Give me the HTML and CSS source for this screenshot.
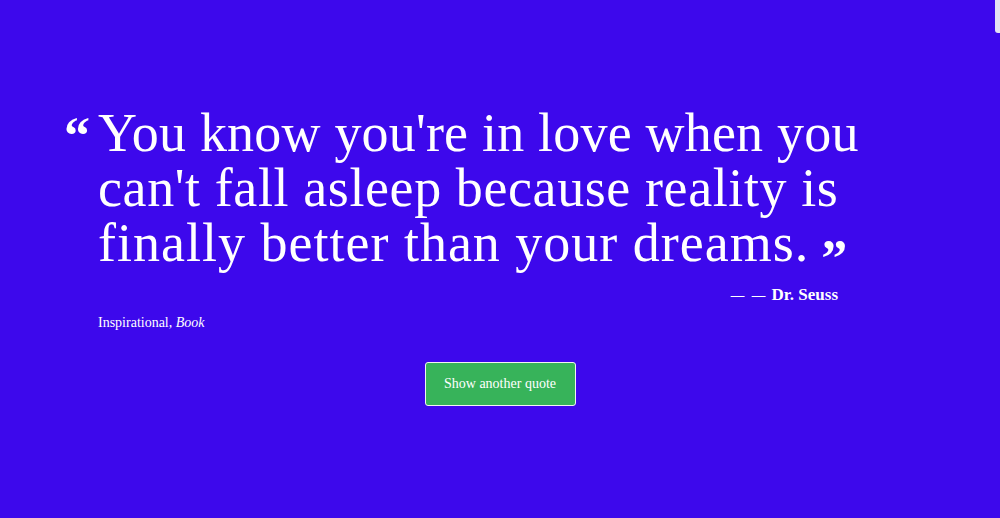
FILE: index.html
```html
<!DOCTYPE html>
<html lang="en">
<head>
<meta charset="utf-8">
<title>Random Quote</title>
<link rel="stylesheet" href="styles.css">
</head>
<body>
<div class="scroll-thumb"></div>
<main class="page">
  <section class="quote-box">
    <blockquote class="quote">
      <span class="mark open">&ldquo;</span>
      <p class="text"><span class="line l1">You know you're in love when you</span><span class="line l2">can't fall asleep because reality is</span><span class="line l3">finally better than your dreams.<span class="mark close">&rdquo;</span></span></p>
    </blockquote>
    <div class="author"><span class="dash">&mdash;</span> <span class="dash">&mdash;</span> Dr. Seuss</div>
    <div class="tags">Inspirational, <em>Book</em></div>
  </section>
  <div class="actions">
    <button class="btn" type="button">Show another quote</button>
  </div>
</main>
</body>
</html>
```
FILE: styles.css
```css
html, body {
  margin: 0;
  padding: 0;
  height: 100%;
}
body {
  background: #3d08ec;
  color: #fff;
  font-family: "Liberation Serif", "DejaVu Serif", serif;
  overflow: hidden;
}
.scroll-thumb {
  position: absolute;
  top: 0;
  right: 0;
  width: 5px;
  height: 33px;
  background: #e4e2f4;
  border-bottom-left-radius: 3px;
}
.page {
  padding-top: 106px;
}
.quote-box {
  width: 800px;
  margin-left: 64px;
}
.quote {
  margin: 0;
  display: flex;
  align-items: flex-start;
}
.mark {
  font-weight: bold;
  font-size: 52px;
  line-height: 1;
}
.open {
  width: 34px;
  flex: none;
  margin-top: 4px;
}
.close {
  display: inline-block;
  margin-left: 12px;
  letter-spacing: 0;
  position: relative;
  top: 15px;
}
.text {
  margin: 0;
  font-size: 54px;
  line-height: 55px;
}
.line {
  display: block;
  white-space: nowrap;
}
.l1 {
  letter-spacing: 0.2px;
}
.l2 {
  letter-spacing: 0.6px;
}
.l3 {
  letter-spacing: 1px;
}
.author {
  text-align: right;
  font-weight: bold;
  font-size: 17px;
  margin-top: 14px;
  padding-right: 26px;
}
.dash {
  display: inline-block;
  font-weight: normal;
  transform: scaleX(0.8);
}
.tags {
  margin-top: 10px;
  margin-left: 34px;
  font-size: 14px;
}
.tags em {
  font-style: italic;
}
.actions {
  display: flex;
  justify-content: center;
  margin-top: 31px;
}
.btn {
  width: 151px;
  height: 44px;
  background: #37b35a;
  color: #fff;
  border: 1px solid #f2f2f2;
  border-radius: 3px;
  font-family: "Liberation Serif", "DejaVu Serif", serif;
  font-size: 14px;
  padding: 0;
}
```
